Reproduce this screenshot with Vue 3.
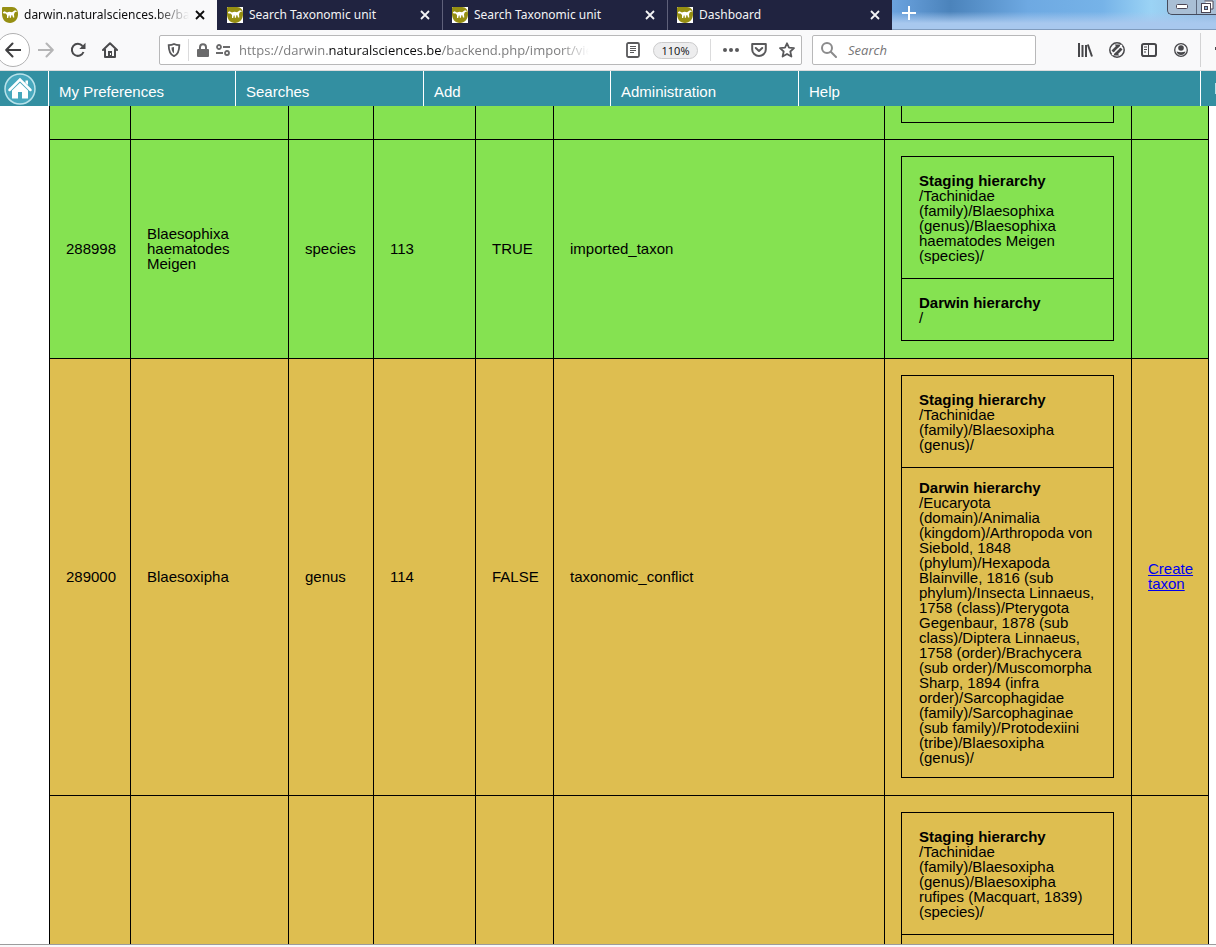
<script setup>
const tabs = [
  { title: 'darwin.naturalsciences.be/back', active: true },
  { title: 'Search Taxonomic unit' },
  { title: 'Search Taxonomic unit' },
  { title: 'Dashboard' },
]

const menu = ['My Preferences', 'Searches', 'Add', 'Administration', 'Help']

const rows = [
  {
    id: '288998',
    name: ['Blaesophixa', 'haematodes', 'Meigen'],
    level: 'species',
    parent: '113',
    imported: 'TRUE',
    status: 'imported_taxon',
    tone: 'ok',
    staging: ['/Tachinidae', '(family)/Blaesophixa', '(genus)/Blaesophixa', 'haematodes Meigen', '(species)/'],
    darwin: ['/'],
  },
  {
    id: '289000',
    name: ['Blaesoxipha'],
    level: 'genus',
    parent: '114',
    imported: 'FALSE',
    status: 'taxonomic_conflict',
    tone: 'conflict',
    staging: ['/Tachinidae', '(family)/Blaesoxipha', '(genus)/'],
    darwin: [
      '/Eucaryota',
      '(domain)/Animalia',
      '(kingdom)/Arthropoda von',
      'Siebold, 1848',
      '(phylum)/Hexapoda',
      'Blainville, 1816 (sub',
      'phylum)/Insecta Linnaeus,',
      '1758 (class)/Pterygota',
      'Gegenbaur, 1878 (sub',
      'class)/Diptera Linnaeus,',
      '1758 (order)/Brachycera',
      '(sub order)/Muscomorpha',
      'Sharp, 1894 (infra',
      'order)/Sarcophagidae',
      '(family)/Sarcophaginae',
      '(sub family)/Protodexiini',
      '(tribe)/Blaesoxipha',
      '(genus)/',
    ],
    action: ['Create', 'taxon'],
  },
]

const lastStaging = ['/Tachinidae', '(family)/Blaesoxipha', '(genus)/Blaesoxipha', 'rufipes (Macquart, 1839)', '(species)/']
</script>

<template>
  <div class="browser">
    <div class="tabbar">
      <div v-for="(tab, i) in tabs" :key="i" class="tab" :class="{ active: tab.active }">
        <svg class="favicon" width="16" height="16" viewBox="0 0 16 16">
          <rect v-if="!tab.active" width="16" height="16" fill="#fff" />
          <path d="M0 1Q0 0 1 0H10C14 0 16 3 16 7C16 12.500 12.500 16 8 16C3 16 0 12 0 7Z" fill="#968f12" />
          <path d="M.8 5.200L2.500 4.300L5 5.500Q7.500 4.300 10 5.300L13 3.300L15.300 4.200L12.800 5.300L12 7.200L12.300 10.500H11L10.300 8.300L9.300 8.200L9 10.800H7.800L7.600 8.500L6.800 8.600L6.200 11H5L5 8L3.600 6.600L1.500 6.500Z" fill="#fff" />
        </svg>
        <span class="tab-title">{{ tab.title }}</span>
        <button class="close" aria-label="Close tab">
          <svg width="10" height="10" viewBox="0 0 10 10"><path d="M1 1L9 9M9 1L1 9" stroke="currentColor" stroke-width="1.800" fill="none" /></svg>
        </button>
      </div>
      <div class="sky">
        <button class="new-tab" aria-label="New tab">
          <svg width="14" height="14" viewBox="0 0 14 14"><path d="M7 0V14M0 7H14" stroke="#fff" stroke-width="2" /></svg>
        </button>
        <div class="window-buttons">
          <button aria-label="Minimize">
            <svg width="14" height="8" viewBox="0 0 14 8"><rect x="1.500" y="1.500" width="11" height="4" rx="1" fill="#fff" stroke="#4b4654" /></svg>
          </button>
          <button aria-label="Restore">
            <svg width="14" height="14" viewBox="0 0 14 14"><path d="M4.500 1H13V9H11" fill="#fff" stroke="#4b4654" /><rect x="1.500" y="3.500" width="9" height="9" fill="#fff" stroke="#4b4654" /><rect x="4.500" y="6.500" width="3" height="3" fill="#8eb3d8" stroke="#4b4654" /></svg>
          </button>
        </div>
      </div>
    </div>

    <div class="toolbar">
      <button class="back" aria-label="Back">
        <svg width="16" height="16" viewBox="0 0 16 16"><path d="M15.500 8H1.500M7.500 1.500L1.200 8L7.500 14.500" stroke="#3f3f41" stroke-width="2" fill="none" stroke-linecap="round" stroke-linejoin="round" /></svg>
      </button>
      <div class="nav-buttons">
        <button aria-label="Forward">
          <svg width="16" height="16" viewBox="0 0 16 16"><path d="M.5 8H14.500M8.500 1.500L14.800 8L8.500 14.500" stroke="#b5b5b6" stroke-width="2" fill="none" stroke-linecap="round" stroke-linejoin="round" /></svg>
        </button>
        <button aria-label="Reload">
          <svg width="16" height="16" viewBox="0 0 16 16"><path d="M13.500 10A6 6 0 1 1 12.500 4" stroke="#4a4a4c" stroke-width="2" fill="none" /><path d="M15.500 .8V7H9.300Z" fill="#4a4a4c" /></svg>
        </button>
        <button aria-label="Home">
          <svg width="16" height="16" viewBox="0 0 16 16"><path d="M1 8L8 1.200L15 8M3 7.500V15H13V7.500" stroke="#4a4a4c" stroke-width="2" fill="none" stroke-linecap="round" stroke-linejoin="round" /><path d="M6 15V9H10V15Z" fill="#4a4a4c" /><rect x="8" y="11" width="1" height="2" fill="#fff" /></svg>
        </button>
      </div>

      <div class="urlbar">
        <svg width="14" height="14" viewBox="0 0 14 14"><path d="M7 1C9 2 11 2.200 12.300 2.200C12.300 8 11 11.500 7 13.200C3 11.500 1.700 8 1.700 2.200C3 2.200 5 2 7 1Z" fill="none" stroke="#59595b" stroke-width="1.800" /><path d="M7 4V10.300C5 9 4.600 7 4.500 4.500Z" fill="#59595b" /></svg>
        <i class="divider"></i>
        <svg class="lock" width="12" height="14" viewBox="0 0 12 14"><path d="M3 7V4.200A3 3 0 0 1 9 4.200V7" fill="none" stroke="#6a6a6b" stroke-width="2" /><rect y="6" width="12" height="8" rx="1" fill="#6a6a6b" /></svg>
        <svg class="perms" width="14" height="12" viewBox="0 0 14 12"><circle cx="3" cy="3" r="2" fill="none" stroke="#6a6a6b" stroke-width="1.800" /><path d="M7 3H14M0 9H7" stroke="#6a6a6b" stroke-width="2" /><circle cx="11" cy="9" r="2" fill="none" stroke="#6a6a6b" stroke-width="1.800" /></svg>
        <div class="url">https://darwin.<b>naturalsciences.be</b>/backend.php/import/vie</div>
        <svg width="14" height="16" viewBox="0 0 14 16"><rect x="1" y="1" width="12" height="14" rx="1.500" fill="#fff" stroke="#59595b" stroke-width="1.800" /><path d="M4 4.500H10M4 6.500H10M4 8.500H10M4 10.500H8" stroke="#59595b" /></svg>
        <button class="zoom">110%</button>
        <i class="divider"></i>
        <div class="page-actions">
          <svg width="16" height="16" viewBox="0 0 16 16" fill="#59595b"><circle cx="2" cy="8" r="2" /><circle cx="8" cy="8" r="2" /><circle cx="14" cy="8" r="2" /></svg>
          <svg width="16" height="16" viewBox="0 0 16 16" fill="none" stroke="#59595b" stroke-width="2" stroke-linecap="round" stroke-linejoin="round"><path d="M1.200 2H14.800V7.500A6.800 6.500 0 0 1 1.200 7.500ZM4.800 6L8 9L11.200 6" /></svg>
          <svg width="16" height="16" viewBox="0 0 16 16"><path d="M8 1.300L10 5.700L15 6.200L11.300 9.500L12.400 14.500L8 12L3.600 14.500L4.700 9.500L1 6.200L6 5.700Z" fill="none" stroke="#59595b" stroke-width="1.800" stroke-linejoin="round" /></svg>
        </div>
      </div>

      <label class="search">
        <svg width="16" height="16" viewBox="0 0 16 16"><circle cx="6" cy="6" r="5" fill="none" stroke="#8b8b8c" stroke-width="2" /><path d="M9.800 9.800L15 15" stroke="#8b8b8c" stroke-width="2" stroke-linecap="round" /></svg>
        <input type="text" placeholder="Search" aria-label="Search" />
      </label>

      <div class="tools">
        <svg width="16" height="16" viewBox="0 0 16 16" stroke="#47474a" stroke-width="2" fill="none"><path d="M2 1V15M5.500 3V15M9 3V15" /><path d="M10.800 2.500L15 14.500" /></svg>
        <svg width="16" height="16" viewBox="0 0 16 16"><circle cx="8" cy="8" r="7.200" fill="none" stroke="#47474a" stroke-width="1.500" /><path d="M2.500 8.500L7 4L5.500 2.500H11V7.500L9.300 6L4.500 10.500Z" fill="#47474a" /><path d="M13.500 7.500L9 12L10.500 13.500H5V8.500L6.700 10L11.500 5.500Z" fill="#47474a" /><path d="M13 3L3 13" stroke="#f9f9fa" stroke-width="1.200" /></svg>
        <svg width="16" height="16" viewBox="0 0 16 16"><rect x="1" y="2" width="14" height="12" rx="1.800" fill="none" stroke="#47474a" stroke-width="2" /><path d="M7.500 2V14" stroke="#47474a" /><path d="M3 5H6M3 7.500H6M3 10H5" stroke="#47474a" /></svg>
        <svg width="16" height="16" viewBox="0 0 16 16"><circle cx="8" cy="8" r="6.300" fill="none" stroke="#47474a" stroke-width="1.300" /><circle cx="8" cy="6" r="2.800" fill="#47474a" /><path d="M3.500 9.500Q8 11 12.500 9.500Q11.500 13 8 13Q4.500 13 3.500 9.500Z" fill="#47474a" /></svg>
      </div>
      <div class="overflow"><i></i></div>
    </div>

    <nav class="menu">
      <a class="home" href="#" aria-label="Home">
        <svg width="32" height="32" viewBox="0 0 32 32"><circle cx="16" cy="16" r="15" fill="#48a8bd" stroke="#b9e3eb" stroke-width="1.500" /><path d="M5.500 17L16 6.500L26.500 17" stroke="#fff" stroke-width="2.500" fill="none" stroke-linecap="round" /><path d="M8 17.500L16 9.800L24 17.500V25.500H18V19H14V25.500H8Z" fill="#fff" /><path d="M21.500 7.500H24V12L21.500 10Z" fill="#fff" /></svg>
      </a>
      <a v-for="item in menu" :key="item" class="item" href="#">{{ item }}</a>
      <div class="menu-end"><i></i></div>
    </nav>

    <main class="page">
      <table class="taxa">
        <colgroup>
          <col class="c-id" /><col class="c-name" /><col class="c-level" /><col class="c-parent" />
          <col class="c-imported" /><col /><col class="c-tree" /><col class="c-action" />
        </colgroup>
        <tbody>
          <tr class="ok">
            <td v-for="n in 6" :key="n"></td>
            <td class="tree-cell cut"><div class="tree open"></div></td>
            <td></td>
          </tr>
          <tr v-for="row in rows" :key="row.id" :class="row.tone">
            <td>{{ row.id }}</td>
            <td class="lines">{{ row.name.join('\n') }}</td>
            <td>{{ row.level }}</td>
            <td>{{ row.parent }}</td>
            <td>{{ row.imported }}</td>
            <td>{{ row.status }}</td>
            <td class="tree-cell">
              <div class="tree">
                <section><strong>Staging hierarchy</strong><p class="lines">{{ row.staging.join('\n') }}</p></section>
                <section :class="{ long: row.darwin.length > 10 }"><strong>Darwin hierarchy</strong><p class="lines">{{ row.darwin.join('\n') }}</p></section>
              </div>
            </td>
            <td><a v-if="row.action" class="lines" href="#">{{ row.action.join('\n') }}</a></td>
          </tr>
          <tr class="conflict">
            <td v-for="n in 6" :key="n"></td>
            <td class="tree-cell">
              <div class="tree">
                <section><strong>Staging hierarchy</strong><p class="lines">{{ lastStaging.join('\n') }}</p></section>
                <section></section>
              </div>
            </td>
            <td></td>
          </tr>
        </tbody>
      </table>
    </main>
    <div class="bottom-edge"></div>
  </div>
</template>

<style>
body { margin: 0; background: #fff; }
</style>

<style scoped>
.browser {
  display: flex;
  flex-direction: column;
  height: 100vh;
  overflow: hidden;
  font-family: "Liberation Sans", Arial, sans-serif;
  color: #000;
}
button { border: 0; padding: 0; background: none; display: flex; align-items: center; justify-content: center; }
svg { display: block; flex: none; }

.tabbar { display: flex; flex: none; height: 30px; font: 12px/16px "Noto Sans", "Open Sans", sans-serif; }
.tab {
  box-sizing: border-box;
  display: flex;
  align-items: center;
  gap: 6px;
  width: 225px;
  padding: 0 12px 0 9px;
  background: #202340;
  color: #f3f3f5;
  border-left: 1px solid #5f617a;
}
.tab.active { width: 217px; padding-left: 2px; background: #f9f9fa; color: #0c0c0d; border-left: 0; }
.tab.active + .tab { border-left-color: #202340; }
.tab-title { flex: 1; min-width: 0; overflow: hidden; white-space: nowrap; }
.tab.active .tab-title { mask-image: linear-gradient(to right, #000 80%, transparent); }
.close { color: inherit; width: 10px; height: 10px; }
.sky {
  flex: 1;
  display: flex;
  align-items: flex-start;
  justify-content: space-between;
  background:
    linear-gradient(to bottom, transparent 40%, #a8c8ee 80%),
    linear-gradient(to right, #6ba3df 0, #4b83bb 18%, #6ea9e2 42%, #76b3e8 65%, #9bd3f5 80%, #8fb6dc);
  border-bottom: 1px solid #7f9bbd;
  box-sizing: border-box;
  overflow: hidden;
}
.new-tab { margin: 6px 0 0 10px; }
.window-buttons { display: flex; height: 14px; border: 1px solid #454b5c; border-top: 0; border-right: 0; border-radius: 0 0 0 5px; background: #a9bfd5; }
.window-buttons button { width: 28px; height: 14px; }
.window-buttons button + button { width: 20px; border-left: 1px solid #5b677c; }

.toolbar {
  box-sizing: border-box;
  display: flex;
  flex: none;
  align-items: center;
  height: 41px;
  background: #f9f9fa;
  border-bottom: 1px solid #dcdcdd;
}
.back { box-sizing: border-box; width: 34px; height: 34px; margin-left: -4px; border: 1px solid #b1b1b2; border-radius: 50%; background: #fff; }
.nav-buttons { display: flex; gap: 16px; margin: 0 41px 0 8px; }
.urlbar, .search {
  box-sizing: border-box;
  display: flex;
  align-items: center;
  height: 30px;
  background: #fff;
  border: 1px solid #b8b8b9;
  border-radius: 2px;
  font: 13px/20px "Open Sans", "Noto Sans", sans-serif;
}
.urlbar { flex: 1; min-width: 0; padding: 0 6px 0 7px; }
.divider { flex: none; width: 1px; height: 22px; margin: 0 7px; background: #dbdbdc; }
.lock { margin-left: 1px; }
.perms { margin-left: 7px; }
.url {
  flex: 1;
  min-width: 0;
  margin: 0 30px 0 9px;
  overflow: hidden;
  white-space: nowrap;
  color: #7d7d7e;
  mask-image: linear-gradient(to right, #000 90%, transparent 98%);
}
.url b { font-weight: 400; color: #0c0c0d; }
.zoom { width: 45px; height: 17px; margin: 0 5px 0 13px; border: 1px solid #cbcbcc; border-radius: 9px; background: #ededee; font: 11px/15px "Open Sans", sans-serif; color: #0c0c0d; box-sizing: border-box; }
.page-actions { display: flex; gap: 12px; margin-left: 5px; }
.search { width: 224px; margin-left: 10px; padding: 0 8px; gap: 11px; }
.search input { flex: 1; min-width: 0; border: 0; padding: 0; outline: 0; background: none; font: inherit; }
.search input::placeholder { font-style: italic; color: #757576; opacity: 1; }
.tools { display: flex; gap: 16px; margin: 0 11px 0 41px; }
.overflow { display: flex; align-items: center; justify-content: flex-end; box-sizing: border-box; width: 16px; height: 34px; border-left: 1px solid #d3d3d4; }
.overflow i { width: 1px; height: 3px; margin-bottom: 4px; background: #47474a; }

.menu { display: flex; flex: none; height: 35px; background: #338fa1; font-size: 15px; line-height: 20px; }
.home { width: 48px; padding: 2px 4px; box-sizing: border-box; }
.item { box-sizing: border-box; width: 188px; padding: 11px 10px 0; border-left: 1px solid #fff; color: #fff; text-decoration: none; }
.item:nth-child(even) { width: 187px; }
.item:nth-child(6) { flex: 1; }
.menu-end { display: flex; align-items: center; justify-content: flex-end; box-sizing: border-box; width: 16px; border-left: 1px solid #fff; }
.menu-end i { width: 1px; height: 11px; background: #b9e3eb; }

.page { flex: 1; min-height: 0; overflow: hidden; padding: 0 7px 0 49px; font-size: 15px; line-height: 15px; }
.taxa { width: 100%; table-layout: fixed; border-collapse: separate; border-spacing: 0; border-left: 1px solid #000; }
.c-id { width: 81px; }
.c-name { width: 158px; }
.c-level { width: 85px; }
.c-parent { width: 102px; }
.c-imported { width: 78px; }
.c-tree { width: 247px; }
.c-action { width: 77px; }
td { padding: 0 16px 2px; border: solid #000; border-width: 0 1px 1px 0; vertical-align: middle; }
.ok { background: #85e251; }
.conflict { background: #debe50; }
.lines { white-space: pre-line; }
.tree-cell { padding: 16px 17px 17px 16px; }
.tree-cell.cut { padding: 0 17px 16px 16px; }
.tree { border: 1px solid #000; }
.tree.open { height: 16px; border-top: 0; }
.tree section { padding: 16px 17px 15px; }
.tree section + section { border-top: 1px solid #000; }
.tree .long { padding: 12px 17px; }
strong { display: block; }
p { margin: 0; }
td a { color: #00e; }
.bottom-edge { flex: none; height: 2px; border-top: 1px solid #9c9c9c; background: #f9f9fa; }
</style>
